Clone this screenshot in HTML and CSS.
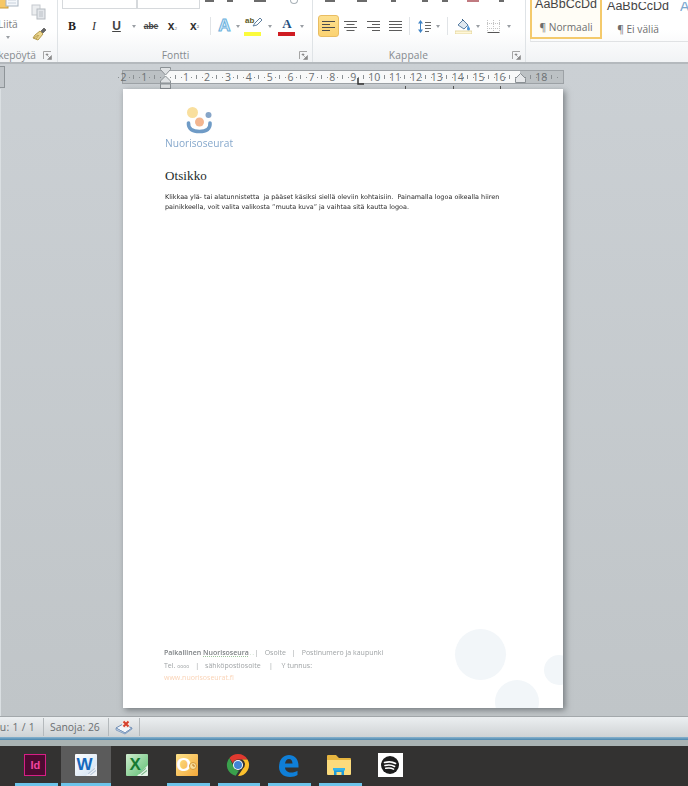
FILE: index.html
```html
<!DOCTYPE html>
<html lang="fi">
<head>
<meta charset="utf-8">
<title>Nuorisoseurat</title>
<link rel="stylesheet" href="styles.css">
</head>
<body>
<svg class="defs" width="0" height="0" aria-hidden="true">
  <symbol id="launch" viewBox="0 0 9 9"><path d="M.5 8V.5H8" fill="none" stroke="#a5a5a5"/><path d="M3 3h2v1h-2zM8.500 4.500V8.500H4.500zM4 4l3 3" fill="#8a8a8a" stroke="#8a8a8a" stroke-width=".6"/></symbol>
</svg>

<header class="ribbon">
  <section class="group g-clip">
    <div class="clip-body">
      <div class="paste">
        <svg class="paste-icon" width="22" height="9" viewBox="0 0 22 9"><rect x="-3" y="-6" width="11" height="14" fill="#f6c765" stroke="#c99a3b"/><rect x="6" y="-8" width="12" height="14" fill="#f4f7fb" stroke="#a9b4c0"/><path d="M8 0h8M8 3h8" stroke="#c9d2dc"/></svg>
        <span class="paste-label">Liitä</span>
        <span class="caret paste-caret"></span>
      </div>
      <div class="clip-tools">
        <svg width="16" height="16" viewBox="0 0 16 16"><rect x="1" y="1" width="8" height="10" fill="#eceef0" stroke="#c6cacf"/><rect x="6" y="5" width="8" height="10" fill="#e3e6ea" stroke="#b6bbc1"/><path d="M8 8h4M8 10h4M8 12h4" stroke="#bcc1c7"/></svg>
        <svg width="16" height="16" viewBox="0 0 16 16"><path d="M9 5l3 3-5 6-5-2 2-3z" fill="#ecd68f" stroke="#b59b4e"/><path d="M10 5l3-3 2 2-3 3z" fill="#666" stroke="#444" stroke-width=".6"/><path d="M3 12l4-3M5 13l3-4" stroke="#a88d3c" stroke-width=".7"/></svg>
      </div>
    </div>
    <div class="group-label label-end"><span class="label-text">Leikepöytä</span><svg class="launch-icon" width="9" height="9"><use href="#launch"/></svg></div>
  </section>

  <section class="group g-font">
    <div class="top-row font-top">
      <span class="select sel-a"></span><span class="select sel-b"></span>
      <span class="mark m-a"></span><span class="mark m-b"></span><span class="mark m-c"></span><span class="mark-ring"></span>
    </div>
    <div class="tools font-tools">
      <span class="tool t-b">B</span>
      <span class="tool t-i">I</span>
      <span class="tool t-u">U</span>
      <span class="caret"></span>
      <span class="tool t-abe">abe</span>
      <span class="tool t-sub">x<small>₂</small></span>
      <span class="tool t-sup">x<small>²</small></span>
      <span class="sep"></span>
      <span class="tool t-glow">A</span>
      <span class="caret"></span>
      <span class="tool t-high"><span class="ab">ab</span><svg class="pen" width="11" height="9" viewBox="0 0 11 9"><path d="M1 8l2-3 5-5 2 2-5 5z" fill="#fff" stroke="#5f7f9f"/></svg><i class="bar bar-yellow"></i></span>
      <span class="caret"></span>
      <span class="tool t-color">A<i class="bar bar-red"></i></span>
      <span class="caret"></span>
    </div>
    <div class="group-label label-center font-label"><span class="label-text">Fontti</span><svg class="launch-icon" width="9" height="9"><use href="#launch"/></svg></div>
  </section>

  <section class="group g-para">
    <div class="top-row para-top">
      <span class="mark p-a"></span><span class="mark p-b"></span><span class="mark p-c"></span><span class="mark p-d"></span><span class="mark p-e"></span><span class="mark p-f red"></span><span class="mark p-g"></span>
    </div>
    <div class="tools para-tools">
      <span class="tool align on"><svg width="13" height="10" viewBox="0 0 13 10"><path d="M0 .5h13M0 3.500h8M0 6.500h13M0 9.500h8" stroke="#4d4d4d"/></svg></span>
      <span class="tool align"><svg width="13" height="10" viewBox="0 0 13 10"><path d="M0 .5h13M2.500 3.500h8M0 6.500h13M2.500 9.500h8" stroke="#5c5c5c"/></svg></span>
      <span class="tool align"><svg width="13" height="10" viewBox="0 0 13 10"><path d="M0 .5h13M5 3.500h8M0 6.500h13M5 9.500h8" stroke="#5c5c5c"/></svg></span>
      <span class="tool align"><svg width="13" height="10" viewBox="0 0 13 10"><path d="M0 .5h13M0 3.500h13M0 6.500h13M0 9.500h13" stroke="#5c5c5c"/></svg></span>
      <span class="sep"></span>
      <span class="tool"><svg width="13" height="13" viewBox="0 0 13 13"><path d="M2.500 2v9" stroke="#3f83c5"/><path d="M0 3.500L2.500 0 5 3.500zM0 9.500L2.500 13 5 9.500z" fill="#3f83c5"/><path d="M7 2.500h6M7 5.500h6M7 8.500h6M7 11.500h4" stroke="#666"/></svg></span>
      <span class="caret"></span>
      <span class="sep"></span>
      <span class="tool"><svg width="17" height="16" viewBox="0 0 17 16"><path d="M3 7l5-5 5 5-4 4z" fill="#dfe8f0" stroke="#5a7fa3"/><path d="M7 1l2 2" stroke="#3a5f83"/><path d="M13 7c1 2 2 3 2 4a1.200 1.200 0 0 1-3 0c0-1 .5-2 1-4z" fill="#4a93d6"/><rect x="0" y="13" width="17" height="3" fill="#fff7d8" stroke="#d9c98a" stroke-width=".7"/></svg></span>
      <span class="caret"></span>
      <span class="tool"><svg width="13" height="13" viewBox="0 0 13 13"><path d="M.5 12.500h12" stroke="#555"/><path d="M.5 0v12M6.500 0v12M12.500 0v12M0 3.500h13M0 8.500h13" stroke="#c4c4c4" stroke-dasharray="1 1"/></svg></span>
      <span class="caret"></span>
    </div>
    <div class="group-label label-center para-label"><span class="label-text">Kappale</span><svg class="launch-icon" width="9" height="9"><use href="#launch"/></svg></div>
  </section>

  <section class="group g-styles">
    <div class="gallery">
      <div class="style-card selected"><span class="style-sample">AaBbCcDd</span><span class="style-name">¶ Normaali</span></div>
      <div class="style-card second"><span class="style-sample">AaBbCcDd</span><span class="style-name">¶ Ei väliä</span></div>
      <div class="style-card clipped"><span class="style-sample head">A</span></div>
    </div>
  </section>
</header>

<main class="workspace">
  <aside class="vstrip"><div class="vstub"></div><div class="vbar"></div></aside>
  <div class="work-main">
    <div class="ruler-row">
      <div class="ruler">
        <div class="track">
          <span>2</span><span>1</span><span></span><span>1</span><span>2</span><span>3</span><span>4</span><span>5</span><span>6</span><span>7</span><span>8</span><span>9</span><span>10</span><span>11</span><span>12</span><span>13</span><span>14</span><span>15</span><span>16</span><span></span><span>18</span><span class="end"></span>
        </div>
        <svg class="marker indent-left" width="11" height="22" viewBox="0 0 11 22"><path d="M.5.5h10v2L5.500 8 .5 2.500z" fill="#dfe2e4" stroke="#8b9195"/><path d="M5.500 9l5 5v2H.5v-2z" fill="#dfe2e4" stroke="#8b9195"/><rect x=".5" y="17" width="10" height="4.500" fill="#dfe2e4" stroke="#8b9195"/></svg>
        <svg class="marker indent-right" width="11" height="10" viewBox="0 0 11 10"><path d="M5.500.5l5 5v4H.5v-4z" fill="#e6e8ea" stroke="#8b9195"/></svg>
        <svg class="marker tab-mark" width="7" height="7" viewBox="0 0 7 7"><path d="M1 0v6h6" fill="none" stroke="#333" stroke-width="1.500"/></svg>
        <i class="marker tick tick-a"></i><i class="marker tick tick-b"></i><i class="marker tick tick-c"></i>
      </div>
    </div>
    <article class="page">
      <i class="bubble b1"></i><i class="bubble b2"></i><i class="bubble b3"></i>
      <div class="logo">
        <svg class="logo-mark" width="28" height="32" viewBox="0 0 28 32">
          <circle cx="7.500" cy="7.500" r="5.500" fill="#f9df9e"/>
          <circle cx="14.500" cy="17" r="4.500" fill="#f3b690"/>
          <circle cx="23.500" cy="10" r="3" fill="#86a5c8"/>
          <path d="M3.500 18c-.5 6 4 8.500 11 8.500s11-2.500 10.500-8.500" fill="none" stroke="#6f9bc6" stroke-width="3.600" stroke-linecap="round"/>
        </svg>
        <span class="logo-text">Nuorisoseurat</span>
      </div>
      <h1 class="title">Otsikko</h1>
      <p class="body-text">Klikkaa ylä- tai alatunnistetta  ja pääset käsiksi siellä oleviin kohtaisiin.  Painamalla logoa oikealla hiiren<br>painikkeella, voit valita valikosta ”muuta kuva” ja vaihtaa sitä kautta logoa.</p>
      <footer class="page-foot">
        <p class="foot-line"><b>Paikallinen</b> <b class="squiggle">Nuorisoseura</b><span class="dots">. .</span><span class="pipe tight">|</span>Osoite<span class="pipe">|</span>Postinumero ja kaupunki</p>
        <p class="foot-line">Tel. <small>oooo</small><span class="pipe">|</span>sähköpostiosoite<span class="pipe wide">|</span>Y tunnus:</p>
        <p class="foot-line foot-url">www.nuorisoseurat.fi</p>
      </footer>
    </article>
  </div>
</main>

<div class="statusbar">
  <div class="st-cell st-page"><span class="st-clip">Sivu: 1 / 1</span></div>
  <div class="st-cell st-words">Sanoja: 26</div>
  <div class="st-cell st-icon">
    <svg width="18" height="16" viewBox="0 0 18 16"><path d="M1 9l7-4 9 4-7 5z" fill="#f3f6fa" stroke="#6d8db5"/><path d="M1 9v2l9 4 7-5V9l-7 5z" fill="#c5d5e8" stroke="#6d8db5" stroke-width=".7"/><circle cx="11" cy="5" r="4" fill="#f5e9e4"/><path d="M8.500 2.500l5 5M13.500 2.500l-5 5" stroke="#d6402c" stroke-width="2"/></svg>
  </div>
</div>
<div class="status-line"></div>
<div class="status-gap"></div>

<nav class="taskbar">
  <div class="task open">
    <span class="tk-id">Id</span>
  </div>
  <div class="task active">
    <span class="tk-doc tk-word">W<svg class="fold" width="11" height="11" viewBox="0 0 10 10"><path d="M10 0v10H0z" fill="#eef2f7"/><path d="M2 8l6-5M4 9l5-4" stroke="#b7c7da"/></svg></span>
  </div>
  <div class="task">
    <span class="tk-doc tk-excel">X<svg class="fold" width="11" height="11" viewBox="0 0 10 10"><path d="M10 0v10H0z" fill="#e4f3e7"/><path d="M2 8l6-5M4 9l5-4" stroke="#7db98a"/></svg></span>
  </div>
  <div class="task open">
    <span class="tk-doc tk-outlook">O<svg class="fold clock" width="10" height="10" viewBox="0 0 10 10"><circle cx="5" cy="5" r="3.500" fill="#f7dd9a" stroke="#d69a3a"/><path d="M5 3v2h2" stroke="#c07a20" fill="none"/></svg></span>
  </div>
  <div class="task open">
    <svg width="24" height="24" viewBox="0 0 24 24">
      <path d="M12 1a11 11 0 0 1 9.530 5.500H12a5.500 5.500 0 0 0-5.200 3.700L3.400 5A11 11 0 0 1 12 1z" fill="#e0392f"/>
      <path d="M21.530 6.500A11 11 0 0 1 12 23l5-7.500a5.500 5.500 0 0 0-.8-9z" fill="#fbc02d"/>
      <path d="M3.400 5l4.300 8.500A5.500 5.500 0 0 0 13 17.400L9.700 22.800A11 11 0 0 1 3.400 5z" fill="#3aa04c"/>
      <circle cx="12" cy="12" r="5" fill="#fff"/><circle cx="12" cy="12" r="4" fill="#4285d6"/>
    </svg>
  </div>
  <div class="task open">
    <svg width="21" height="23" viewBox="0 0 21 23"><path d="M1 13C1 6 5 1 11 1c6 0 9.500 4.500 9.500 11v1.500H7c.3 3.500 3 5 6 5 2.600 0 5-.8 6.500-1.800v4.300C17.800 22.200 15.200 23 12 23 5.500 23 1 19 1 13zM7 9.500h7.500C14.400 7 13.300 5 11 5 8.800 5 7.400 7 7 9.500z" fill="#0f7fd8"/></svg>
  </div>
  <div class="task open">
    <svg width="24" height="22" viewBox="0 0 24 22"><path d="M0 2a1 1 0 0 1 1-1h8l3 3h11a1 1 0 0 1 1 1v3H0z" fill="#e6b53f"/><path d="M0 6h24v14a1 1 0 0 1-1 1H1a1 1 0 0 1-1-1z" fill="#fbdb7c"/><path d="M7 21v-5h10v5h-2.500v-3h-5v3z" fill="#1e9bd8"/><rect x="6" y="14" width="12" height="2.500" fill="#35b4ea"/></svg>
  </div>
  <div class="task">
    <span class="tk-spotify"><svg width="18" height="18" viewBox="0 0 18 18"><circle cx="9" cy="9" r="9" fill="#1c1c1c"/><path d="M3.500 6.500c4-1 8-.8 11 1M4 9.500c3.500-.8 7-.5 9.500 1M4.800 12.300c2.800-.6 5.500-.4 7.700.8" fill="none" stroke="#fff" stroke-width="1.600" stroke-linecap="round"/></svg></span>
  </div>
</nav>
</body>
</html>
```

FILE: styles.css
```css
* { box-sizing: border-box; }
html, body { margin: 0; padding: 0; }
body {
  width: 688px;
  height: 786px;
  overflow: hidden;
  display: flex;
  flex-direction: column;
  font-family: "Open Sans", "Liberation Sans", sans-serif;
  background: #c6cbcf;
}
.defs { position: absolute; }

/* ribbon */
.ribbon {
  height: 64px;
  flex: none;
  display: flex;
  background: linear-gradient(#ffffff 0, #ffffff 30px, #f1f3f5 62px);
  border-bottom: 2px solid #b4b9bd;
  overflow: hidden;
}
.group { display: flex; flex-direction: column; border-right: 1px solid #dfe3e6; flex: none; }
.g-clip { width: 58px; }
.g-font { width: 255px; }
.g-para { width: 213px; }
.g-styles { flex: 1; border-right: 0; }
.group-label {
  height: 14px;
  margin-top: auto;
  display: flex;
  align-items: center;
  font-size: 10.2px;
  color: #858a8e;
  position: relative;
  white-space: nowrap;
}
.label-center { justify-content: center; }
.font-label { padding-right: 19px; }
.label-end { justify-content: flex-end; padding-right: 21px; }
.para-label { padding-right: 21px; letter-spacing: .15px; }
.launch-icon { position: absolute; right: 4px; top: 3px; }
.g-clip .launch-icon { right: 5px; }

.clip-body { display: flex; height: 47px; }
.paste { width: 29px; display: flex; flex-direction: column; align-items: flex-start; }
.paste-icon { flex: none; display: block; }
.paste-label { font-size: 10.2px; color: #7d7d7d; margin: 8px 0 0 -2px; line-height: 14px; }
.paste-caret { margin: 5px 0 0 6px; }
.clip-tools { display: flex; flex-direction: column; gap: 6px; padding: 4px 0 0 2px; }

.top-row { height: 9px; display: flex; align-items: flex-start; }
.font-top { padding-left: 4px; }
.select { height: 9px; background: #fff; border: 1px solid #d6d9dc; border-top: 0; display: block; }
.sel-a { width: 75px; }
.sel-b { width: 63px; margin-left: 0; }
.mark { display: block; width: 9px; height: 2px; background: #6b6b6b; }
.mark.red { background: #c07a80; }
.m-a { margin-left: 5px; }
.m-b { margin-left: 13px; width: 6px; }
.m-c { margin-left: 21px; width: 12px; }
.mark-ring { display: block; width: 8px; height: 4px; margin-left: 24px; border: 1px solid #a9b2b8; border-top: 0; border-radius: 0 0 5px 5px; }
.para-top { padding-left: 12px; }
.p-a { width: 10px; }
.p-b { margin-left: 22px; width: 10px; }
.p-c { margin-left: 24px; width: 5px; }
.p-d { margin-left: 26px; width: 6px; }
.p-e { margin-left: 14px; width: 6px; }
.p-f { margin-left: 19px; width: 12px; }
.p-g { margin-left: 20px; width: 5px; }

.tools { display: grid; height: 22px; margin-top: 6px; align-items: center; justify-items: center; }
.font-tools {
  padding-left: 3px;
  grid-template-columns: 22px 22px 23px 12px 22px 21px 23px 8px 21px 6px 24px 10px 24px 6px;
}
.para-tools {
  padding-left: 4px;
  grid-template-columns: 22px 23px 22px 22px 6px 24px 3px 16px 16px 14px 16px 16px;
}
.tool { display: flex; align-items: center; justify-content: center; position: relative; color: #3a3a3a; line-height: 1; }
.caret { display: block; width: 0; height: 0; border: 2.500px solid transparent; border-top: 3px solid #9a9fa4; border-bottom: 0; }
.sep { display: block; width: 1px; height: 18px; background: #e1e4e7; }
.t-b { font: bold 12px "Liberation Serif", serif; color: #222; }
.t-i { font: italic 12px "Liberation Serif", serif; color: #333; }
.t-u { font: bold 12px "Liberation Sans", sans-serif; color: #444; text-decoration: underline; }
.t-abe { font: bold 8.500px "Liberation Sans", sans-serif; color: #444; text-decoration: line-through; }
.t-sub, .t-sup { font: bold 12px "Liberation Sans", sans-serif; color: #333; }
.t-sub small, .t-sup small { font-size: 7px; font-weight: normal; color: #777; }
.t-glow { font: bold 17px "Liberation Sans", sans-serif; color: #d9eefb; -webkit-text-stroke: 1px #6bb1dd; }
.t-high { width: 18px; height: 20px; display: block; }
.ab { position: absolute; left: 1px; top: 0; font: bold 8px "Liberation Sans", sans-serif; color: #5d5a1f; }
.pen { position: absolute; left: 8px; top: 2px; }
.bar { display: block; position: absolute; height: 4px; left: 0; }
.bar-yellow { width: 17px; background: #fbfb3c; left: 0; bottom: 0; }
.t-color { font: bold 13px "Liberation Serif", serif; color: #1f4f80; width: 18px; height: 20px; align-items: flex-start; }
.bar-red { width: 17px; background: #cf1c22; bottom: 0; }
.align { width: 21px; height: 22px; }
.align.on { background: linear-gradient(#fde08f, #fbd271); border: 1px solid #e9bd62; border-radius: 3px; }

/* style gallery */
.gallery { display: flex; height: 42px; margin: 0 0 0 4px; border-bottom: 1px solid #e0e2e4; border-left: 1px solid #e6e8ea; }
.style-card { width: 72px; height: 39px; flex: none; margin-left: -1px; display: flex; flex-direction: column; align-items: center; overflow: hidden; border: 2px solid transparent; }
.style-card.second { margin-left: 1px; width: 70px; }
.style-card.second .style-name { margin-left: 0; }
.style-card.clipped { width: 16px; align-items: flex-start; margin-left: 5px; }
.style-card.selected { border-color: #f4ca6c; border-top: 0; background: #fffdf6; }
.style-sample { font: 12.5px/12px "Liberation Sans", sans-serif; color: #444; margin-top: -2px; white-space: nowrap; }
.head { color: #7aa6cf; font-size: 14px; }
.style-name { font-size: 10.2px; line-height: 14px; color: #6e6e6e; margin-top: 10px; white-space: nowrap; }

/* workspace */
.workspace { flex: 1; min-height: 0; display: flex; background: linear-gradient(#cbd0d4, #c0c5c8); border-bottom: 1px solid #a3a8ab; }
.vstrip { width: 5px; flex: none; display: flex; flex-direction: column; padding-top: 2px; }
.vstub { height: 22px; background: #bfc4c8; border: 1px solid #8e9498; border-left: 0; }
.vbar { flex: 1; margin-top: 1px; width: 1px; background: #dadfe2; }
.work-main { flex: 1; min-width: 0; padding-left: 118px; display: flex; flex-direction: column; }
.ruler-row { height: 25px; padding: 6px 0 0 0; margin-left: -1px; }
.ruler {
  position: relative;
  width: 442px;
  height: 14px;
  border: 1px solid #9da2a6;
  background: linear-gradient(to right, #bcc1c4 42px, #f8f9f9 42px, #f8f9f9 397px, #bcc1c4 397px);
}
.track { display: flex; height: 12px; margin-left: -10px; }
.track span {
  flex: none;
  width: 20.9px;
  display: block;
  text-align: center;
  font-size: 10.5px;
  line-height: 12px;
  color: #6b6f72;
  background:
    linear-gradient(#8a8f92, #8a8f92) right center / 1px 4px no-repeat,
    linear-gradient(#8a8f92, #8a8f92) 15.5px center / 1px 1px no-repeat,
    linear-gradient(#8a8f92, #8a8f92) 5px center / 1px 1px no-repeat;
}
.track .end { width: 11px; background: linear-gradient(#8a8f92, #8a8f92) 5px center / 1px 1px no-repeat; }
.marker { position: absolute; display: block; }
.indent-left { left: 37px; top: -4px; }
.indent-right { left: 392px; top: 2px; }
.tab-mark { left: 234px; top: 7px; }
.tick { width: 1px; height: 3px; background: #555; top: 15px; }
.tick-a { left: 282px; }
.tick-b { left: 330px; }
.tick-c { left: 377px; }

.page {
  position: relative;
  width: 440px;
  height: 619px;
  background: #fff;
  box-shadow: 2px 2px 6px rgba(40, 45, 50, .5);
  padding: 16px 0 0 42px;
  overflow: hidden;
}
.bubble { position: absolute; display: block; border-radius: 50%; background: #f2f6f9; }
.b1 { width: 51px; height: 51px; left: 332px; top: 540px; }
.b2 { width: 44px; height: 44px; left: 372px; top: 591px; }
.b3 { width: 30px; height: 30px; left: 421px; top: 566px; }
.logo { position: relative; width: 68px; display: flex; flex-direction: column; align-items: center; filter: blur(.3px); }
.logo-mark { display: block; margin-left: 0; }
.logo-text { font: 400 10.2px/13px "Open Sans", sans-serif; color: #86a8cc; white-space: nowrap; margin-top: 0; }
.title { margin: 18px 0 0; font: normal 13px/16px "Liberation Serif", serif; color: #1d2a2a; letter-spacing: .1px; }
.body-text { margin: 9px 0 0; font: 6.450px/9.500px "DejaVu Sans", sans-serif; color: #2b2b2b; white-space: pre; filter: blur(.2px); }
.page-foot { position: absolute; left: 41px; top: 558px; color: #9fa3a5; font-size: 7px; filter: blur(.25px); }
.foot-line { margin: 0; line-height: 11.500px; white-space: nowrap; }
.foot-line b { color: #7d8184; font-weight: 600; }
.foot-line small { font-size: 5px; }
.squiggle { text-decoration: underline dotted #9cc59c; }
.dots { margin-left: 1px; color: #9cc59c; font-size: 5px; }
.pipe { margin: 0 6px; }
.pipe.tight { margin-left: 1px; }
.pipe.wide { margin: 0 8.500px; }
.foot-url { color: #fad3b6; }

/* status */
.statusbar { height: 20px; flex: none; display: flex; align-items: stretch; background: linear-gradient(#eceff1, #cfd3d5); }
.st-cell { display: flex; align-items: center; border-right: 1px solid #b4b9bc; font-size: 10.4px; color: #6a6e71; white-space: nowrap; margin: 1px 0; }
.st-page { width: 44px; justify-content: flex-end; padding-right: 8px; overflow: hidden; }
.st-clip { flex: none; letter-spacing: .3px; }
.st-words { width: 65px; padding-left: 6px; }
.st-icon { width: 31px; padding-left: 6px; }
.status-line { height: 3px; flex: none; background: linear-gradient(#8ab4cf, #4a86ad); }
.status-gap { height: 6px; flex: none; background: #a9b3b3; }

/* taskbar */
.taskbar { height: 40px; flex: none; display: flex; padding-left: 10px; background: #333231; }
.task { width: 50.7px; flex: none; display: flex; align-items: center; justify-content: center; position: relative; padding-bottom: 2px; }
.task.open::after { content: ""; position: absolute; left: 5px; right: 3px; bottom: 0; height: 3px; background: #6cc4ea; }
.task.active { background: #5b5b5b; }
.task.active::after { content: ""; position: absolute; left: 0; right: 0; bottom: 0; height: 3px; background: #6cc4ea; }
.tk-id { width: 22px; height: 22px; display: flex; align-items: center; justify-content: center; background: #4c0b31; border: 1.500px solid #d81f85; color: #f0459f; font: bold 11px "Liberation Sans", sans-serif; }
.tk-doc { position: relative; width: 22px; height: 22px; display: flex; align-items: center; justify-content: center; border-radius: 1px; font: bold 17px "Liberation Sans", sans-serif; overflow: hidden; padding-right: 3px; }
.fold { position: absolute; right: 0; bottom: 0; }
.clock { bottom: 5px; }
.tk-word { background: linear-gradient(135deg, #fff, #cfe0f2); color: #1668bd; }
.tk-excel { background: linear-gradient(135deg, #cfeccf, #5fbf73); color: #167a32; }
.tk-outlook { background: linear-gradient(135deg, #fde28a, #f4a83a); color: #fff; padding-right: 7px; font-size: 19px; }
.tk-spotify { width: 25px; height: 24px; background: #fff; display: flex; align-items: center; justify-content: center; }
```
